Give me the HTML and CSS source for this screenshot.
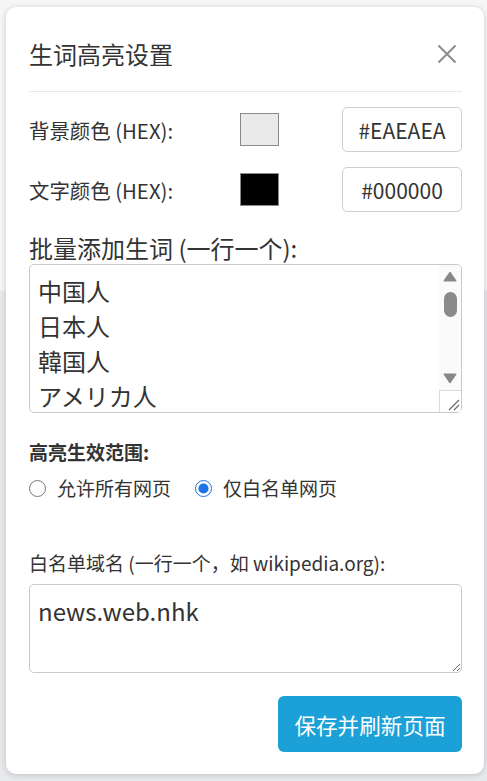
FILE: index.html
```html
<!DOCTYPE html>
<html lang="zh-CN">
<head>
<meta charset="utf-8">
<title>生词高亮设置</title>
<link rel="stylesheet" href="styles.css">
</head>
<body>
<div class="modal">
  <div class="modal-header">
    <h2 class="modal-title">生词高亮设置</h2>
    <button class="close-btn" type="button" aria-label="关闭">
      <svg width="20" height="20" viewBox="0 0 20 20"><path d="M1.5 1.5L18.5 18.5M18.5 1.5L1.5 18.5" stroke="#8c8c8c" stroke-width="2" fill="none"/></svg>
    </button>
  </div>
  <div class="modal-body">
    <div class="color-row">
      <label class="row-label">背景颜色 (HEX):</label>
      <span class="swatch swatch-bg"></span>
      <input class="hex-input" type="text" value="#EAEAEA">
    </div>
    <div class="color-row">
      <label class="row-label">文字颜色 (HEX):</label>
      <span class="swatch swatch-fg"></span>
      <input class="hex-input" type="text" value="#000000">
    </div>
    <label class="block-label">批量添加生词 (一行一个):</label>
    <div class="area-wrap">
      <textarea class="words-area">中国人
日本人
韓国人
アメリカ人
イギリス人
フランス人
ドイツ人
イタリア人
スペイン人
ロシア人
インド人
タイ人
カナダ人</textarea>
      <div class="fake-scrollbar" aria-hidden="true">
        <div class="sb-btn sb-up">
          <svg width="14" height="11" viewBox="0 0 14 11"><polygon points="7,1.5 12.8,9.8 1.2,9.8" fill="#878787" stroke="#878787" stroke-width="1.4" stroke-linejoin="round"/></svg>
        </div>
        <div class="sb-track"><div class="sb-thumb"></div></div>
        <div class="sb-btn sb-down">
          <svg width="14" height="11" viewBox="0 0 14 11"><polygon points="1.2,1.2 12.8,1.2 7,9.5" fill="#878787" stroke="#878787" stroke-width="1.4" stroke-linejoin="round"/></svg>
        </div>
        <div class="sb-corner">
          <svg width="12" height="12" viewBox="0 0 12 12"><path d="M1 11L11 1M6 11L11 6" stroke="#6a6a6a" stroke-width="1.2" fill="none"/></svg>
        </div>
      </div>
    </div>
    <div class="scope-title">高亮生效范围:</div>
    <div class="radio-row">
      <label class="radio-item"><input type="radio" name="scope"><span>允许所有网页</span></label>
      <label class="radio-item"><input type="radio" name="scope" checked><span>仅白名单网页</span></label>
    </div>
    <label class="small-label">白名单域名 (一行一个，如 wikipedia.org):</label>
    <textarea class="domain-area">news.web.nhk</textarea>
    <div class="actions">
      <button class="save-btn" type="button">保存并刷新页面</button>
    </div>
  </div>
</div>
</body>
</html>
```

FILE: styles.css
```css
* { box-sizing: border-box; }

html, body { height: 100%; }

body {
  margin: 0;
  padding: 7px 3px 7px 6px;
  font-family: "Noto Sans CJK SC", "Noto Sans", sans-serif;
  color: #333;
  background: linear-gradient(#f6f6f7 0, #f6f6f7 290px, #e7e9ec 291px, #e7e9ec 100%);
}

.modal {
  height: 767px;
  background: #fff;
  border-radius: 10px;
  box-shadow: 0 1px 6px rgba(0, 0, 0, 0.18);
  padding: 0 22px 0 23px;
  display: flex;
  flex-direction: column;
}

.modal-header {
  display: flex;
  align-items: center;
  justify-content: space-between;
  padding: 32px 0 22px;
  border-bottom: 1px solid #e9e9e9;
}

.modal-title {
  margin: 0;
  font-size: 24px;
  line-height: 30px;
  font-weight: 400;
  color: #333;
}

.close-btn {
  border: 0;
  background: none;
  padding: 0;
  margin-right: 5px;
  width: 20px;
  height: 20px;
  display: flex;
}

.modal-body {
  display: flex;
  flex-direction: column;
}

.color-row {
  display: flex;
  align-items: center;
  height: 45px;
  margin-top: 15px;
}

.row-label {
  width: 211px;
  font-size: 20.4px;
  line-height: 28px;
  color: #333;
}

.swatch {
  width: 39px;
  height: 33px;
  border: 1px solid #8a8a8a;
}

.swatch-bg { background: #eaeaea; }
.swatch-fg { background: #000; }

.hex-input {
  margin-left: auto;
  width: 120px;
  height: 45px;
  border: 1px solid #cfcfcf;
  border-radius: 5px;
  font-family: inherit;
  font-size: 21px;
  color: #333;
  text-align: center;
  padding: 0;
}

.block-label {
  margin-top: 22px;
  font-size: 24px;
  line-height: 28px;
  color: #333;
}

textarea {
  display: block;
  width: 433px;
  border: 1px solid #c9c9c9;
  border-radius: 5px;
  font-family: inherit;
  font-size: 24px;
  line-height: 35px;
  color: #333;
  padding: 8px 8px;
  margin: 0;
}

.area-wrap {
  position: relative;
  margin-top: 2px;
  width: 433px;
}

.words-area {
  height: 149px;
  overflow: hidden;
  padding-right: 30px;
}

.fake-scrollbar {
  position: absolute;
  top: 1px;
  right: 1px;
  bottom: 1px;
  width: 22px;
  display: flex;
  flex-direction: column;
  background: #fafafa;
  border-top-right-radius: 4px;
  border-bottom-right-radius: 4px;
}

.sb-btn {
  height: 23px;
  display: flex;
  justify-content: center;
}

.sb-up { align-items: flex-start; padding-top: 6px; }
.sb-down { align-items: flex-start; padding-top: 6px; }

.sb-track {
  flex: 1;
  display: flex;
  justify-content: center;
}

.sb-thumb {
  width: 13px;
  height: 25px;
  margin-top: 4px;
  border-radius: 7px;
  background: #8a8a8a;
}

.sb-corner {
  height: 22px;
  background: #fff;
  border-left: 1px solid #d9d9d9;
  border-top: 1px solid #d9d9d9;
  border-bottom-right-radius: 4px;
  display: flex;
  align-items: flex-end;
  justify-content: flex-end;
  padding: 0 1px 1px 0;
}

.scope-title {
  margin-top: 26px;
  font-size: 19px;
  line-height: 26px;
  font-weight: 700;
  color: #333;
}

.radio-row {
  display: flex;
  align-items: center;
  margin-top: 10px;
  height: 26px;
  gap: 24px;
}

.radio-item {
  display: flex;
  align-items: center;
  gap: 11px;
  font-size: 19px;
  line-height: 26px;
  color: #333;
}

.radio-item input {
  width: 17px;
  height: 17px;
  margin: 0;
  accent-color: #1a73e8;
}

.small-label {
  margin-top: 49px;
  font-size: 19px;
  line-height: 26px;
  color: #333;
}

.domain-area {
  margin-top: 8px;
  height: 89px;
}

.actions {
  display: flex;
  justify-content: flex-end;
  margin-top: 23px;
}

.save-btn {
  width: 184px;
  height: 56px;
  border: 0;
  border-radius: 6px;
  background: #1ba1d8;
  color: #fff;
  font-family: inherit;
  font-size: 21.6px;
  padding: 0;
}
```
